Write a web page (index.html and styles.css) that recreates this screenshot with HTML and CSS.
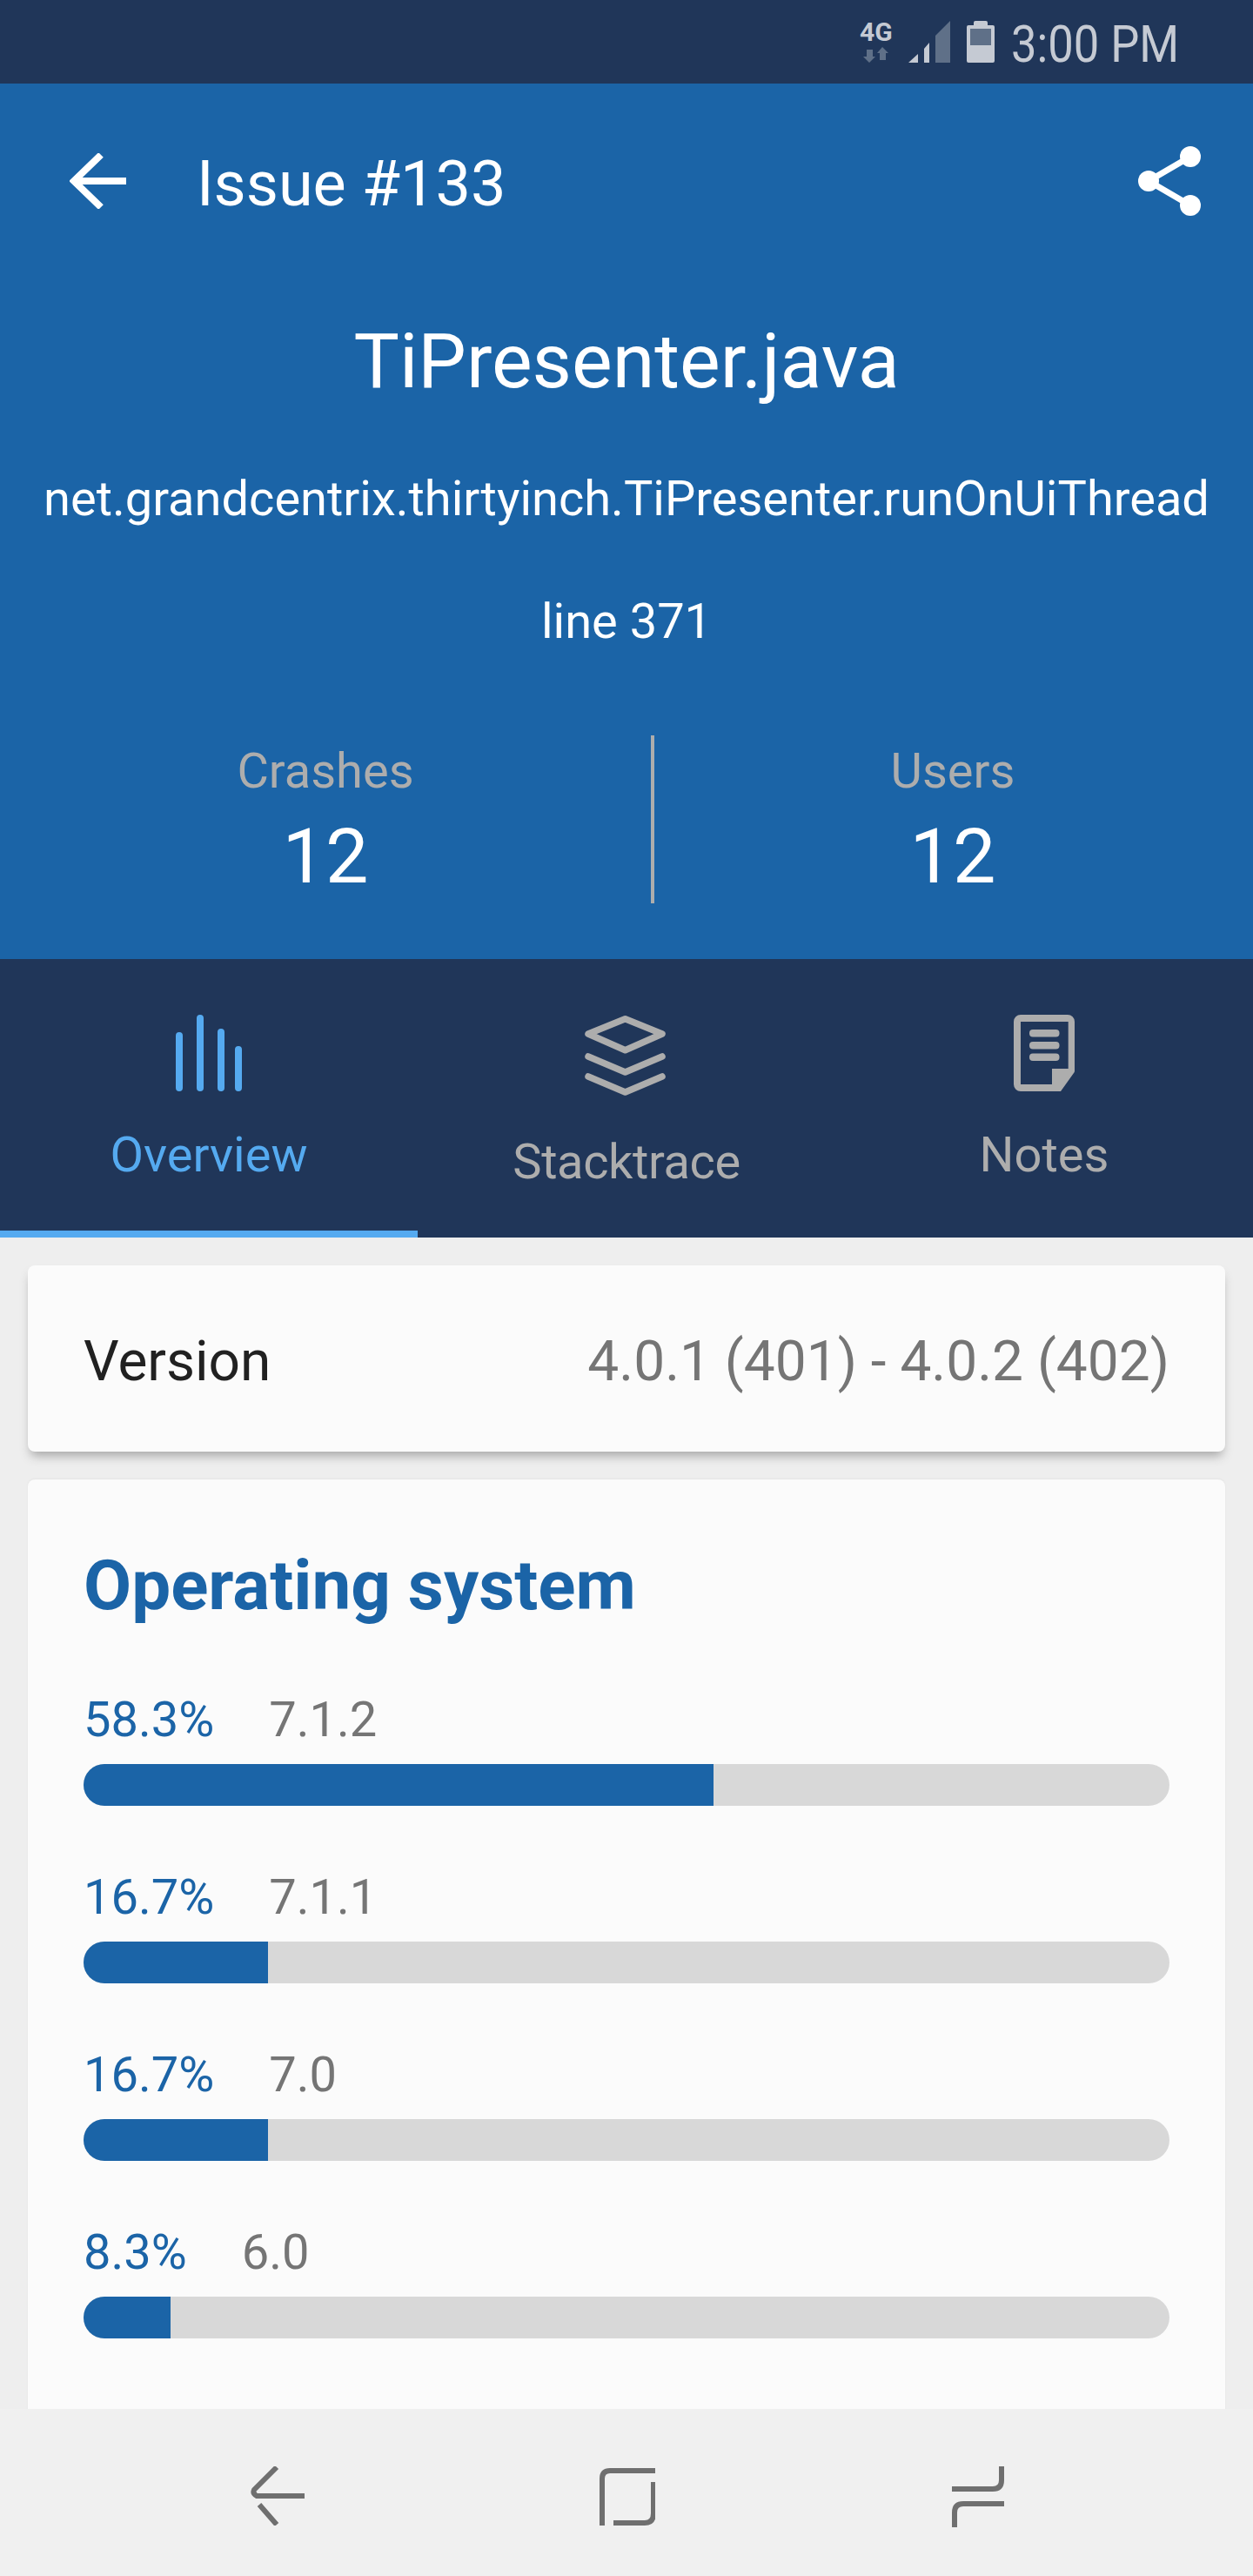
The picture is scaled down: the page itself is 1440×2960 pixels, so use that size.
FILE: index.html
```html
<!DOCTYPE html>
<html lang="en">
<head>
<meta charset="utf-8">
<title>Issue #133</title>
<link rel="stylesheet" href="styles.css">
</head>
<body>
<div class="screen">
  <div class="statusbar">
    <div class="net">
      <span class="net-label">4G</span>
      <svg class="net-arrows" width="40" height="18" viewBox="0 27 40 18">
        <path class="dim" d="M11 30h7v8h3l-7 7-7-7h4zM29 27l7 7h-3v8h-7v-8h-3z"/>
      </svg>
    </div>
    <svg class="signal" width="48" height="48" viewBox="0 0 48 48">
      <path class="lit" d="M0 48 11 38v10zM18 32l6-7v23h-6z"/>
      <path class="dim" d="M31 17 48 0v48H31z"/>
    </svg>
    <svg class="battery" width="32" height="48" viewBox="0 0 32 48">
      <path class="lit" d="M10 0h12a2 2 0 0 1 2 2v3h6a2 2 0 0 1 2 2v39a2 2 0 0 1-2 2H2a2 2 0 0 1-2-2V7a2 2 0 0 1 2-2h6V2a2 2 0 0 1 2-2z"/>
      <rect class="dim" x="4" y="9" width="24" height="19"/>
    </svg>
    <span class="clock">3:00 PM</span>
  </div>

  <header class="hero">
    <div class="toolbar">
      <svg class="back" width="65" height="64" viewBox="0 0 65 64">
        <path d="M65 32H5M36 2 5 32l31 30" fill="none"/>
      </svg>
      <h1 class="toolbar-title">Issue #133</h1>
      <svg class="share" width="72" height="80" viewBox="0 0 72 80">
        <path class="share-line" d="M60 12 12 40l48 28" fill="none"/>
        <circle cx="60" cy="12" r="12"/>
        <circle cx="12" cy="40" r="12"/>
        <circle cx="60" cy="68" r="12"/>
      </svg>
    </div>
    <h2 class="file">TiPresenter.java</h2>
    <p class="method">net.grandcentrix.thirtyinch.TiPresenter.runOnUiThread</p>
    <p class="line">line 371</p>
    <div class="stats">
      <div class="stat">
        <span class="stat-label">Crashes</span>
        <span class="stat-value">12</span>
      </div>
      <div class="stat stat-right">
        <span class="stat-label">Users</span>
        <span class="stat-value">12</span>
      </div>
    </div>
  </header>

  <nav class="tabs">
    <div class="tab tab-active">
      <svg class="tab-icon" width="76" height="88" viewBox="0 0 76 88">
        <g class="bars">
          <path d="M4 24v60M28 4v80M52 20v64M72 40v44"/>
        </g>
      </svg>
      <span class="tab-label">Overview</span>
    </div>
    <div class="tab tab-stack">
      <svg class="tab-icon" width="93" height="93" viewBox="0 0 93 93">
        <g class="layers">
          <path d="M46.500 4.700 89 22 46.500 40.700 4 22z"/>
          <path d="M4 48l42.500 18L89 48"/>
          <path d="M4 71l42.500 18L89 71"/>
        </g>
      </svg>
      <span class="tab-label">Stacktrace</span>
    </div>
    <div class="tab">
      <svg class="tab-icon" width="70" height="88" viewBox="0 0 70 88">
        <path class="note" fill-rule="evenodd" d="M8 0h54a8 8 0 0 1 8 8v56a4 4 0 0 1-1 3L54 88H8a8 8 0 0 1-8-8V8a8 8 0 0 1 8-8zM8 8v72h36V62h18.700V8z"/>
        <rect class="note" x="18" y="17" width="34.500" height="8.500" rx="4"/>
        <rect class="note" x="18" y="31" width="34.500" height="8.500" rx="4"/>
        <rect class="note" x="18" y="44.500" width="34.500" height="8.500" rx="4"/>
      </svg>
      <span class="tab-label">Notes</span>
    </div>
  </nav>

  <main class="content">
    <section class="card version-card">
      <span class="version-label">Version</span>
      <span class="version-value">4.0.1 (401) - 4.0.2 (402)</span>
    </section>
    <section class="card os-card">
      <h3 class="os-title">Operating system</h3>
      <div class="os-row">
        <div class="os-text"><span class="os-pct">58.3%</span><span class="os-name">7.1.2</span></div>
        <div class="track"><div class="fill" style="width:58%"></div></div>
      </div>
      <div class="os-row">
        <div class="os-text"><span class="os-pct">16.7%</span><span class="os-name">7.1.1</span></div>
        <div class="track"><div class="fill" style="width:17%"></div></div>
      </div>
      <div class="os-row">
        <div class="os-text"><span class="os-pct">16.7%</span><span class="os-name">7.0</span></div>
        <div class="track"><div class="fill" style="width:17%"></div></div>
      </div>
      <div class="os-row">
        <div class="os-text"><span class="os-pct">8.3%</span><span class="os-name">6.0</span></div>
        <div class="track"><div class="fill" style="width:8%"></div></div>
      </div>
    </section>
  </main>

  <footer class="navbar">
    <svg class="nav-icon nav-back" width="62" height="68" viewBox="0 0 62 68">
      <path d="M30 1 4 27q-2 4 3 7h55M10 44l20 23"/>
    </svg>
    <svg class="nav-icon nav-home" width="64" height="66" viewBox="0 0 64 66">
      <path d="M64 3H12Q3 3 3 12v54M62 16v36q0 11-10 11H16"/>
    </svg>
    <svg class="nav-icon nav-recent" width="60" height="70" viewBox="0 0 60 70">
      <path d="M57 0v16q0 10-10 10H0M60 43H13Q3 43 3 53v17"/>
    </svg>
  </footer>
</div>
</body>
</html>
```

FILE: styles.css
```css
* { box-sizing: border-box; }
html, body { margin: 0; padding: 0; }
body { font-family: Roboto, "Liberation Sans", sans-serif; background: #eeeeee; }
h1, h2, h3, p { margin: 0; font-weight: 400; }

.screen { width: 1440px; height: 2960px; display: flex; flex-direction: column; overflow: hidden; }

/* status bar */
.statusbar { height: 96px; flex: none; background: #203659; display: flex; align-items: flex-start; justify-content: flex-end; padding: 24px 88px 0 0; }
.statusbar .dim { fill: #5f7088; }
.statusbar .lit { fill: #c5cad3; }
.net { width: 40px; margin-right: 19px; display: flex; flex-direction: column; }
.net-label { font-size: 30px; line-height: 24px; font-weight: 700; color: #c5cad3; margin-top: 1px; padding-left: 3px; white-space: nowrap; }
.net-arrows { display: block; margin-top: 5px; }
.signal { margin-right: 19px; }
.battery { margin-right: 19px; }
.clock { font-size: 60px; line-height: 48px; margin-top: 3px; color: #c5cad3; width: 190px; white-space: nowrap; transform: scaleX(.875); transform-origin: left top; }

/* header */
.hero { height: 1006px; flex: none; background: #1b64a7; color: #fff; display: flex; flex-direction: column; }
.toolbar { height: 128px; margin-top: 48px; padding: 0 60px 0 80px; display: flex; align-items: center; flex: none; }
.back path { stroke: #fff; stroke-width: 8; }
.toolbar-title { font-size: 72px; line-height: 80px; margin: 7px 0 0 81px; flex: 1; }
.share circle { fill: #fff; }
.share-line { stroke: #fff; stroke-width: 7; }
.file { font-size: 88px; line-height: 104px; text-align: center; margin-top: 91px; }
.method { font-size: 56px; line-height: 64px; text-align: center; margin-top: 74px; white-space: nowrap; }
.line { font-size: 56px; line-height: 64px; text-align: center; margin-top: 77px; }
.stats { display: grid; grid-template-columns: 748px 1fr; margin-top: 99px; height: 193px; }
.stat { display: flex; flex-direction: column; align-items: center; padding-top: 9px; }
.stat-right { border-left: 4px solid #adadad; padding-right: 2px; }
.stat-label { font-size: 56px; line-height: 64px; color: #adadad; }
.stat-value { font-size: 88px; line-height: 104px; margin-top: 14px; }

/* tabs */
.tabs { height: 320px; flex: none; background: #203659; display: grid; grid-template-columns: repeat(3, 480px); }
.tab { display: flex; flex-direction: column; align-items: center; padding-top: 64px; color: #adadad; }
.tab-active { color: #55aaf0; border-bottom: 8px solid #55aaf0; }
.tab-icon { flex: none; display: block; }
.tab-label { font-size: 56px; line-height: 64px; margin-top: 41px; }
.tab-stack .tab-icon { margin-right: 3px; }
.tab-stack .tab-label { margin-top: 44px; letter-spacing: -.4px; }
.bars path { stroke: #55aaf0; stroke-width: 8; stroke-linecap: round; fill: none; }
.layers path { stroke: #adadad; stroke-width: 7.500; stroke-linecap: round; stroke-linejoin: round; fill: none; }
.note { fill: #adadad; }

/* content */
.content { flex: 1; min-height: 0; overflow: hidden; padding: 32px 32px 0; display: flex; flex-direction: column; gap: 32px; }
.card { background: #fbfbfb; border-radius: 8px; flex: none; }
.version-card { height: 214px; display: flex; align-items: center; justify-content: space-between; padding: 6px 64px 0; box-shadow: 0 8px 12px -3px #a8a8a8; }
.version-label { font-size: 64px; color: #212121; }
.version-value { font-size: 64px; color: #757575; }
.os-card { padding: 66px 64px 0; height: 1100px; box-shadow: 0 -1px 2px #e4e4e4; }
.os-title { font-size: 80px; line-height: 112px; font-weight: 700; color: #1b64a7; }
.os-row { height: 204px; padding-top: 66px; }
.os-text { display: flex; gap: 63px; font-size: 56px; line-height: 64px; }
.os-pct { color: #1b64a7; }
.os-name { color: #757575; }
.track { margin-top: 19px; height: 48px; border-radius: 24px; background: #d8d8d8; overflow: hidden; }
.fill { height: 100%; background: #1b64a7; }

/* nav bar */
.navbar { height: 192px; flex: none; background: #f0f0f0; display: flex; align-items: flex-start; padding-left: 288px; }
.nav-icon { display: block; flex: none; }
.nav-icon path { stroke: #6f6f6f; stroke-width: 6; fill: none; }
.nav-back { margin-top: 66px; }
.nav-home { margin: 68px 0 0 339px; }
.nav-recent { margin: 66px 0 0 341px; }
```
